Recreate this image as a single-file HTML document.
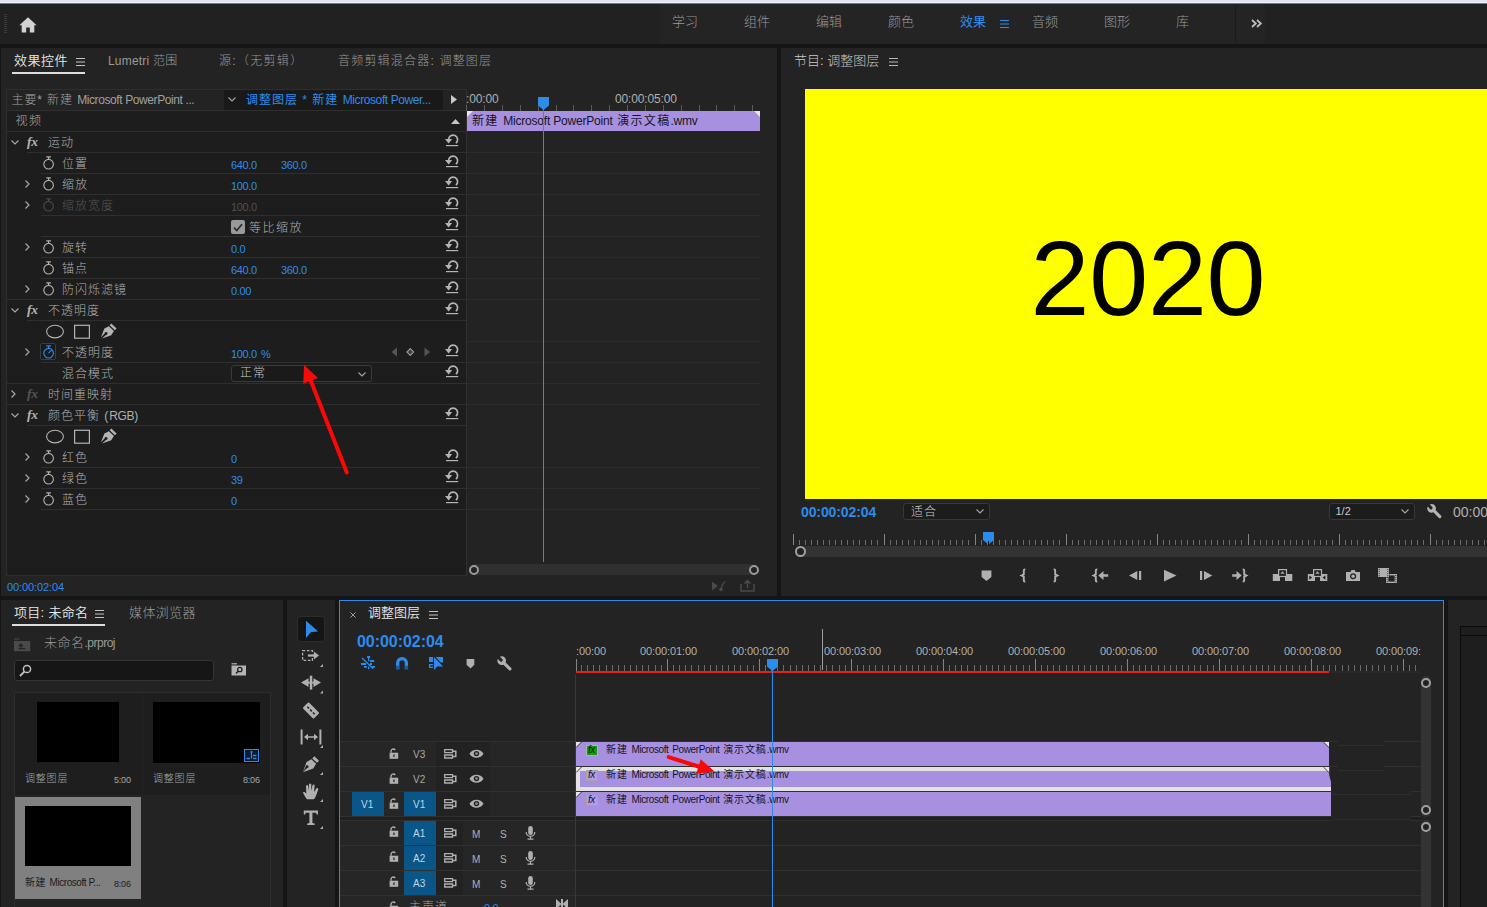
<!DOCTYPE html>
<html lang="zh-CN">
<head>
<meta charset="utf-8">
<title>Adobe Premiere Pro - 调整图层</title>
<style>
html,body{margin:0;padding:0}
body{width:1487px;height:907px;overflow:hidden;position:relative;background:#151515;color:#a7a7a7;
 font-family:"Liberation Sans","Noto Sans CJK SC",sans-serif;font-size:12px;font-weight:300}
div,span,svg,i,b{position:absolute;box-sizing:border-box}
.t{white-space:nowrap;line-height:1}
.pn{background:#232323}
.bl{color:#2d8ceb}
.wh{color:#dcdcdc}
.dm{color:#5a5a5a}
svg{overflow:visible}
.ln{background:#2f2f2f;height:1px}
.fx{font-style:italic;font-weight:700;font-size:13.500px;letter-spacing:-.2px;color:#b4b4b4;font-family:"Liberation Serif","Liberation Sans",serif}
.v{font-size:11px;color:#2d8ceb;letter-spacing:-.35px;font-weight:400}
em{font-style:normal;letter-spacing:-.4px}
.ic{fill:#a7a7a7}
.st{stroke:#a7a7a7;fill:none}
</style>
</head>
<body>
<!-- window top edge -->
<div style="left:0;top:0;width:1487px;height:2px;background:#e1e4f6"></div>
<div style="left:0;top:2px;width:1487px;height:1px;background:#f2f3fa"></div>
<div style="left:0;top:3px;width:1487px;height:1px;background:#77777c"></div>

<!-- workspace bar -->
<div id="topbar" style="left:0;top:4px;width:1487px;height:40px;background:#212121">
  <div style="left:660px;top:0;width:605px;height:40px;background:#242424"></div>
  <div style="left:1235px;top:0;width:1px;height:40px;background:#1a1a1a"></div>
  <!-- grip -->
  <div style="left:4px;top:10px;width:3px;height:20px;background:repeating-linear-gradient(#3a3a3a 0 1px,transparent 1px 2px)"></div>
  <!-- home -->
  <svg style="left:19px;top:13px" width="18" height="16" viewBox="0 0 18 16"><path fill="#d2d2d2" d="M9 0.3 L17.6 8.2 H15.3 V15.6 H10.8 V10.4 H7.2 V15.6 H2.7 V8.2 H0.4 Z"/></svg>
  <span class="t" style="left:672px;top:11px;font-size:13px;color:#999">学习</span>
  <span class="t" style="left:744px;top:11px;font-size:13px;color:#999">组件</span>
  <span class="t" style="left:816px;top:11px;font-size:13px;color:#999">编辑</span>
  <span class="t" style="left:888px;top:11px;font-size:13px;color:#999">颜色</span>
  <span class="t bl" style="left:960px;top:11px;font-size:13px;font-weight:400">效果</span>
  <svg style="left:1000px;top:16px" width="9" height="8" viewBox="0 0 9 8"><path d="M0 .5H9M0 4H9M0 7.5H9" stroke="#2d8ceb" stroke-width="1.1"/></svg>
  <span class="t" style="left:1032px;top:11px;font-size:13px;color:#999">音频</span>
  <span class="t" style="left:1104px;top:11px;font-size:13px;color:#999">图形</span>
  <span class="t" style="left:1176px;top:11px;font-size:13px;color:#999">库</span>
  <svg style="left:1251px;top:15px" width="11" height="9" viewBox="0 0 11 9"><path d="M1 1 4.800 4.500 1 8M6 1 9.800 4.500 6 8" stroke="#bdbdbd" stroke-width="1.800" fill="none"/></svg>
</div>
<!-- ===== Effect Controls panel ===== -->
<div class="pn" style="left:1px;top:48px;width:776px;height:548px"></div>
<span class="t wh" style="left:14px;top:54px;font-size:13px;font-weight:350;color:#e8e8e8;letter-spacing:.5px">效果控件</span>
<svg style="left:76px;top:58px" width="9" height="8" viewBox="0 0 9 8"><path d="M0 .5H9M0 4H9M0 7.5H9" stroke="#c4c4c4" stroke-width="1"/></svg>
<div style="left:12px;top:72px;width:73px;height:2px;background:#dcdcdc"></div>
<span class="t" style="left:108px;top:55px;font-size:12px;color:#9a9a9a;letter-spacing:.2px">Lumetri 范围</span>
<span class="t" style="left:219px;top:55px;font-size:12px;color:#9a9a9a;letter-spacing:1.3px">源:（无剪辑）</span>
<span class="t" style="left:338px;top:55px;font-size:12px;color:#9a9a9a;letter-spacing:1.2px">音频剪辑混合器: 调整图层</span>
<div style="left:6px;top:89px;width:461px;height:487px;background:#1d1d1d;border:1px solid #2f2f2f"></div>
<div style="left:7px;top:90px;width:217px;height:20px;background:#232323"></div>
<div style="left:224px;top:90px;width:219px;height:20px;background:#191919"></div>
<div style="left:443px;top:90px;width:23px;height:20px;background:#232323"></div>
<span class="t" style="left:11.500px;top:94px;font-size:12px;color:#a0a0a0;letter-spacing:.9px">主要* 新建 <em>Microsoft PowerPoint ...</em></span>
<svg style="left:228px;top:97px" width="8" height="5" viewBox="0 0 8 5"><path d="M.5 .5 4 4 7.5 .5" class="st" stroke-width="1.1"/></svg>
<span class="t bl" style="left:246px;top:94px;font-size:12px;font-weight:400;letter-spacing:1px">调整图层 * 新建 <em>Microsoft Power...</em></span>
<svg style="left:451px;top:95px" width="6" height="9" viewBox="0 0 6 9"><path d="M0 0 6 4.5 0 9Z" fill="#c8c8c8"/></svg>
<div class="ln" style="left:7px;top:110px;width:459px"></div>
<span class="t" style="left:15.500px;top:115px;font-size:12px;color:#a7a7a7;letter-spacing:1.600px">视频</span>
<svg style="left:451px;top:119px" width="9" height="5" viewBox="0 0 9 5"><path d="M0 5 4.5 0 9 5Z" fill="#c8c8c8"/></svg>
<div class="ln" style="left:7px;top:131px;width:459px"></div>
<svg style="left:11px;top:140px" width="8" height="5" viewBox="0 0 8 5"><path d="M.5 .5 4 4 7.5 .5" class="st" stroke-width="1.2"/></svg>
<i class="t fx" style="left:27px;top:135px">fx</i>
<span class="t" style="left:48px;top:137px;font-size:12px;color:#b0b0b0;letter-spacing:1px">运动</span>
<svg style="left:445px;top:134px" width="14" height="13" viewBox="0 0 14 13"><path d="M3.6 5.6A4.5 4.5 0 1 1 10.9 9.1" fill="none" stroke="#b4b4b4" stroke-width="1.7"/><path d="M0 5H7.2L3.6 9.4Z" fill="#b4b4b4"/><path d="M1 11.6H13.2" stroke="#b4b4b4" stroke-width="1.2"/></svg>
<div class="ln" style="left:27px;top:152px;width:439px"></div>
<svg style="left:43px;top:156px" width="12" height="14" viewBox="0 0 12 14"><circle cx="5.6" cy="8.2" r="4.8" fill="none" stroke="#b0b0b0" stroke-width="1.15"/><path d="M3.3 .8H7.9M5.6 .8V3.2" stroke="#b0b0b0" stroke-width="1.2" fill="none"/></svg>
<span class="t" style="left:62px;top:158px;font-size:12px;color:#b0b0b0;letter-spacing:1px">位置</span>
<span class="t v" style="left:231px;top:160px">640.0</span>
<span class="t v" style="left:281px;top:160px">360.0</span>
<svg style="left:445px;top:155px" width="14" height="13" viewBox="0 0 14 13"><path d="M3.6 5.6A4.5 4.5 0 1 1 10.9 9.1" fill="none" stroke="#b4b4b4" stroke-width="1.7"/><path d="M0 5H7.2L3.6 9.4Z" fill="#b4b4b4"/><path d="M1 11.6H13.2" stroke="#b4b4b4" stroke-width="1.2"/></svg>
<div class="ln" style="left:41px;top:173px;width:425px"></div>
<svg style="left:25px;top:180px" width="5" height="8" viewBox="0 0 5 8"><path d="M.5 .5 4 4 .5 7.5" class="st" stroke-width="1.2"/></svg>
<svg style="left:43px;top:177px" width="12" height="14" viewBox="0 0 12 14"><circle cx="5.6" cy="8.2" r="4.8" fill="none" stroke="#b0b0b0" stroke-width="1.15"/><path d="M3.3 .8H7.9M5.6 .8V3.2" stroke="#b0b0b0" stroke-width="1.2" fill="none"/></svg>
<span class="t" style="left:62px;top:179px;font-size:12px;color:#b0b0b0;letter-spacing:1px">缩放</span>
<span class="t v" style="left:231px;top:181px">100.0</span>
<svg style="left:445px;top:176px" width="14" height="13" viewBox="0 0 14 13"><path d="M3.6 5.6A4.5 4.5 0 1 1 10.9 9.1" fill="none" stroke="#b4b4b4" stroke-width="1.7"/><path d="M0 5H7.2L3.6 9.4Z" fill="#b4b4b4"/><path d="M1 11.6H13.2" stroke="#b4b4b4" stroke-width="1.2"/></svg>
<div class="ln" style="left:41px;top:194px;width:425px"></div>
<svg style="left:25px;top:201px" width="5" height="8" viewBox="0 0 5 8"><path d="M.5 .5 4 4 .5 7.5" class="st" stroke-width="1.2"/></svg>
<svg style="left:43px;top:198px" width="12" height="14" viewBox="0 0 12 14"><circle cx="5.6" cy="8.2" r="4.8" fill="none" stroke="#4a4a4a" stroke-width="1.15"/><path d="M3.3 .8H7.9M5.6 .8V3.2" stroke="#4a4a4a" stroke-width="1.2" fill="none"/></svg>
<span class="t" style="left:62px;top:200px;font-size:12px;color:#555;letter-spacing:1px">缩放宽度</span>
<span class="t v" style="left:231px;top:202px;color:#505050">100.0</span>
<svg style="left:445px;top:197px" width="14" height="13" viewBox="0 0 14 13"><path d="M3.6 5.6A4.5 4.5 0 1 1 10.9 9.1" fill="none" stroke="#b4b4b4" stroke-width="1.7"/><path d="M0 5H7.2L3.6 9.4Z" fill="#b4b4b4"/><path d="M1 11.6H13.2" stroke="#b4b4b4" stroke-width="1.2"/></svg>
<div class="ln" style="left:41px;top:215px;width:425px"></div>
<div style="left:231px;top:220px;width:14px;height:14px;background:#9a9a9a;border-radius:2px"></div>
<svg style="left:233px;top:223px" width="10" height="9" viewBox="0 0 10 9"><path d="M1 4.6 3.8 7.6 9 1.2" fill="none" stroke="#2a2a2a" stroke-width="1.600"/></svg>
<span class="t" style="left:249px;top:222px;font-size:12px;color:#b0b0b0;letter-spacing:1.500px">等比缩放</span>
<svg style="left:445px;top:218px" width="14" height="13" viewBox="0 0 14 13"><path d="M3.6 5.6A4.5 4.5 0 1 1 10.9 9.1" fill="none" stroke="#b4b4b4" stroke-width="1.7"/><path d="M0 5H7.2L3.6 9.4Z" fill="#b4b4b4"/><path d="M1 11.6H13.2" stroke="#b4b4b4" stroke-width="1.2"/></svg>
<div class="ln" style="left:41px;top:236px;width:425px"></div>
<svg style="left:25px;top:243px" width="5" height="8" viewBox="0 0 5 8"><path d="M.5 .5 4 4 .5 7.5" class="st" stroke-width="1.2"/></svg>
<svg style="left:43px;top:240px" width="12" height="14" viewBox="0 0 12 14"><circle cx="5.6" cy="8.2" r="4.8" fill="none" stroke="#b0b0b0" stroke-width="1.15"/><path d="M3.3 .8H7.9M5.6 .8V3.2" stroke="#b0b0b0" stroke-width="1.2" fill="none"/></svg>
<span class="t" style="left:62px;top:242px;font-size:12px;color:#b0b0b0;letter-spacing:1px">旋转</span>
<span class="t v" style="left:231px;top:244px">0.0</span>
<svg style="left:445px;top:239px" width="14" height="13" viewBox="0 0 14 13"><path d="M3.6 5.6A4.5 4.5 0 1 1 10.9 9.1" fill="none" stroke="#b4b4b4" stroke-width="1.7"/><path d="M0 5H7.2L3.6 9.4Z" fill="#b4b4b4"/><path d="M1 11.6H13.2" stroke="#b4b4b4" stroke-width="1.2"/></svg>
<div class="ln" style="left:41px;top:257px;width:425px"></div>
<svg style="left:43px;top:261px" width="12" height="14" viewBox="0 0 12 14"><circle cx="5.6" cy="8.2" r="4.8" fill="none" stroke="#b0b0b0" stroke-width="1.15"/><path d="M3.3 .8H7.9M5.6 .8V3.2" stroke="#b0b0b0" stroke-width="1.2" fill="none"/></svg>
<span class="t" style="left:62px;top:263px;font-size:12px;color:#b0b0b0;letter-spacing:1px">锚点</span>
<span class="t v" style="left:231px;top:265px">640.0</span>
<span class="t v" style="left:281px;top:265px">360.0</span>
<svg style="left:445px;top:260px" width="14" height="13" viewBox="0 0 14 13"><path d="M3.6 5.6A4.5 4.5 0 1 1 10.9 9.1" fill="none" stroke="#b4b4b4" stroke-width="1.7"/><path d="M0 5H7.2L3.6 9.4Z" fill="#b4b4b4"/><path d="M1 11.6H13.2" stroke="#b4b4b4" stroke-width="1.2"/></svg>
<div class="ln" style="left:41px;top:278px;width:425px"></div>
<svg style="left:25px;top:285px" width="5" height="8" viewBox="0 0 5 8"><path d="M.5 .5 4 4 .5 7.5" class="st" stroke-width="1.2"/></svg>
<svg style="left:43px;top:282px" width="12" height="14" viewBox="0 0 12 14"><circle cx="5.6" cy="8.2" r="4.8" fill="none" stroke="#b0b0b0" stroke-width="1.15"/><path d="M3.3 .8H7.9M5.6 .8V3.2" stroke="#b0b0b0" stroke-width="1.2" fill="none"/></svg>
<span class="t" style="left:62px;top:284px;font-size:12px;color:#b0b0b0;letter-spacing:1px">防闪烁滤镜</span>
<span class="t v" style="left:231px;top:286px">0.00</span>
<svg style="left:445px;top:281px" width="14" height="13" viewBox="0 0 14 13"><path d="M3.6 5.6A4.5 4.5 0 1 1 10.9 9.1" fill="none" stroke="#b4b4b4" stroke-width="1.7"/><path d="M0 5H7.2L3.6 9.4Z" fill="#b4b4b4"/><path d="M1 11.6H13.2" stroke="#b4b4b4" stroke-width="1.2"/></svg>
<div class="ln" style="left:7px;top:299px;width:459px"></div>
<svg style="left:11px;top:308px" width="8" height="5" viewBox="0 0 8 5"><path d="M.5 .5 4 4 7.5 .5" class="st" stroke-width="1.2"/></svg>
<i class="t fx" style="left:27px;top:303px">fx</i>
<span class="t" style="left:48px;top:305px;font-size:12px;color:#b0b0b0;letter-spacing:1px">不透明度</span>
<svg style="left:445px;top:302px" width="14" height="13" viewBox="0 0 14 13"><path d="M3.6 5.6A4.5 4.5 0 1 1 10.9 9.1" fill="none" stroke="#b4b4b4" stroke-width="1.7"/><path d="M0 5H7.2L3.6 9.4Z" fill="#b4b4b4"/><path d="M1 11.6H13.2" stroke="#b4b4b4" stroke-width="1.2"/></svg>
<div class="ln" style="left:27px;top:320px;width:439px"></div>
<svg style="left:46px;top:323px" width="72" height="16" viewBox="0 0 72 16"><ellipse cx="9" cy="8.600" rx="8.400" ry="6.300" fill="none" stroke="#b4b4b4" stroke-width="1.100"/><rect x="28.600" y="2.300" width="14.800" height="12.900" fill="none" stroke="#b4b4b4" stroke-width="1.200"/><path d="M65.3 .6 70.6 5.6 68.9 7.2 63.7 2.3ZM62.9 3.2 67.9 8 65.2 12.3 56 15.6 60 12 A1.5 1.5 0 1 0 58.6 10.4L54.9 14.3 58.4 5.5Z" fill="#b4b4b4"/></svg>
<svg style="left:25px;top:348px" width="5" height="8" viewBox="0 0 5 8"><path d="M.5 .5 4 4 .5 7.5" class="st" stroke-width="1.2"/></svg>
<div style="left:40px;top:343px;width:16px;height:17px;border:1px solid #3c3c3c;border-radius:2px;background:#1a1a1a"></div>
<svg style="left:43px;top:345px" width="12" height="14" viewBox="0 0 12 14"><circle cx="5.6" cy="8.2" r="4.8" fill="none" stroke="#2d8ceb" stroke-width="1.15"/><path d="M3.3 .8H7.9M5.6 .8V3.2" stroke="#2d8ceb" stroke-width="1.2" fill="none"/><path d="M5.600 8.200 8.600 5.200" stroke="#2d8ceb" stroke-width="1.100"/></svg>
<span class="t" style="left:62px;top:347px;font-size:12px;color:#b0b0b0;letter-spacing:1px">不透明度</span>
<span class="t v" style="left:231px;top:349px;word-spacing:1.500px">100.0 %</span>
<svg style="left:391px;top:347px" width="42" height="10" viewBox="0 0 42 10"><path d="M6 .5V9.5L.5 5Z" fill="#555"/><path d="M33.500 .5V9.500L39 5Z" fill="#555"/><path d="M19.300 1.600 22.600 5 19.300 8.400 16 5Z" fill="#3a3a3a" stroke="#999" stroke-width="1.200"/></svg>
<svg style="left:445px;top:344px" width="14" height="13" viewBox="0 0 14 13"><path d="M3.6 5.6A4.5 4.5 0 1 1 10.9 9.1" fill="none" stroke="#b4b4b4" stroke-width="1.7"/><path d="M0 5H7.2L3.6 9.4Z" fill="#b4b4b4"/><path d="M1 11.6H13.2" stroke="#b4b4b4" stroke-width="1.2"/></svg>
<div class="ln" style="left:41px;top:362px;width:425px"></div>
<span class="t" style="left:62px;top:368px;font-size:12px;color:#b0b0b0;letter-spacing:1px">混合模式</span>
<div style="left:231px;top:365px;width:140.500px;height:17px;border:1px solid #3a3a3a;border-radius:3px;background:#1a1a1a"></div>
<span class="t" style="left:240px;top:367px;font-size:12px;color:#c8c8c8;letter-spacing:1px">正常</span>
<svg style="left:357.500px;top:372px" width="8" height="5" viewBox="0 0 8 5"><path d="M.5 .5 4 4 7.5 .5" class="st" stroke-width="1.1"/></svg>
<svg style="left:445px;top:365px" width="14" height="13" viewBox="0 0 14 13"><path d="M3.6 5.6A4.5 4.5 0 1 1 10.9 9.1" fill="none" stroke="#b4b4b4" stroke-width="1.7"/><path d="M0 5H7.2L3.6 9.4Z" fill="#b4b4b4"/><path d="M1 11.6H13.2" stroke="#b4b4b4" stroke-width="1.2"/></svg>
<div class="ln" style="left:7px;top:383px;width:459px"></div>
<svg style="left:11px;top:390px" width="5" height="8" viewBox="0 0 5 8"><path d="M.5 .5 4 4 .5 7.5" class="st" stroke-width="1.2"/></svg>
<i class="t fx" style="left:27px;top:387px;color:#555">fx</i>
<span class="t" style="left:48px;top:389px;font-size:12px;color:#b0b0b0;letter-spacing:1px">时间重映射</span>
<div class="ln" style="left:7px;top:404px;width:459px"></div>
<svg style="left:11px;top:413px" width="8" height="5" viewBox="0 0 8 5"><path d="M.5 .5 4 4 7.5 .5" class="st" stroke-width="1.2"/></svg>
<i class="t fx" style="left:27px;top:408px">fx</i>
<span class="t" style="left:48px;top:410px;font-size:12px;color:#b0b0b0;letter-spacing:1px">颜色平衡 (<em>RGB</em>)</span>
<svg style="left:445px;top:407px" width="14" height="13" viewBox="0 0 14 13"><path d="M3.6 5.6A4.5 4.5 0 1 1 10.9 9.1" fill="none" stroke="#b4b4b4" stroke-width="1.7"/><path d="M0 5H7.2L3.6 9.4Z" fill="#b4b4b4"/><path d="M1 11.6H13.2" stroke="#b4b4b4" stroke-width="1.2"/></svg>
<div class="ln" style="left:27px;top:425px;width:439px"></div>
<svg style="left:46px;top:428px" width="72" height="16" viewBox="0 0 72 16"><ellipse cx="9" cy="8.600" rx="8.400" ry="6.300" fill="none" stroke="#b4b4b4" stroke-width="1.100"/><rect x="28.600" y="2.300" width="14.800" height="12.900" fill="none" stroke="#b4b4b4" stroke-width="1.200"/><path d="M65.3 .6 70.6 5.6 68.9 7.2 63.7 2.3ZM62.9 3.2 67.9 8 65.2 12.3 56 15.6 60 12 A1.5 1.5 0 1 0 58.6 10.4L54.9 14.3 58.4 5.5Z" fill="#b4b4b4"/></svg>
<svg style="left:25px;top:453px" width="5" height="8" viewBox="0 0 5 8"><path d="M.5 .5 4 4 .5 7.5" class="st" stroke-width="1.2"/></svg>
<svg style="left:43px;top:450px" width="12" height="14" viewBox="0 0 12 14"><circle cx="5.6" cy="8.2" r="4.8" fill="none" stroke="#b0b0b0" stroke-width="1.15"/><path d="M3.3 .8H7.9M5.6 .8V3.2" stroke="#b0b0b0" stroke-width="1.2" fill="none"/></svg>
<span class="t" style="left:62px;top:452px;font-size:12px;color:#b0b0b0;letter-spacing:1px">红色</span>
<span class="t v" style="left:231px;top:454px">0</span>
<svg style="left:445px;top:449px" width="14" height="13" viewBox="0 0 14 13"><path d="M3.6 5.6A4.5 4.5 0 1 1 10.9 9.1" fill="none" stroke="#b4b4b4" stroke-width="1.7"/><path d="M0 5H7.2L3.6 9.4Z" fill="#b4b4b4"/><path d="M1 11.6H13.2" stroke="#b4b4b4" stroke-width="1.2"/></svg>
<div class="ln" style="left:41px;top:467px;width:425px"></div>
<svg style="left:25px;top:474px" width="5" height="8" viewBox="0 0 5 8"><path d="M.5 .5 4 4 .5 7.5" class="st" stroke-width="1.2"/></svg>
<svg style="left:43px;top:471px" width="12" height="14" viewBox="0 0 12 14"><circle cx="5.6" cy="8.2" r="4.8" fill="none" stroke="#b0b0b0" stroke-width="1.15"/><path d="M3.3 .8H7.9M5.6 .8V3.2" stroke="#b0b0b0" stroke-width="1.2" fill="none"/></svg>
<span class="t" style="left:62px;top:473px;font-size:12px;color:#b0b0b0;letter-spacing:1px">绿色</span>
<span class="t v" style="left:231px;top:475px">39</span>
<svg style="left:445px;top:470px" width="14" height="13" viewBox="0 0 14 13"><path d="M3.6 5.6A4.5 4.5 0 1 1 10.9 9.1" fill="none" stroke="#b4b4b4" stroke-width="1.7"/><path d="M0 5H7.2L3.6 9.4Z" fill="#b4b4b4"/><path d="M1 11.6H13.2" stroke="#b4b4b4" stroke-width="1.2"/></svg>
<div class="ln" style="left:41px;top:488px;width:425px"></div>
<svg style="left:25px;top:495px" width="5" height="8" viewBox="0 0 5 8"><path d="M.5 .5 4 4 .5 7.5" class="st" stroke-width="1.2"/></svg>
<svg style="left:43px;top:492px" width="12" height="14" viewBox="0 0 12 14"><circle cx="5.6" cy="8.2" r="4.8" fill="none" stroke="#b0b0b0" stroke-width="1.15"/><path d="M3.3 .8H7.9M5.6 .8V3.2" stroke="#b0b0b0" stroke-width="1.2" fill="none"/></svg>
<span class="t" style="left:62px;top:494px;font-size:12px;color:#b0b0b0;letter-spacing:1px">蓝色</span>
<span class="t v" style="left:231px;top:496px">0</span>
<svg style="left:445px;top:491px" width="14" height="13" viewBox="0 0 14 13"><path d="M3.6 5.6A4.5 4.5 0 1 1 10.9 9.1" fill="none" stroke="#b4b4b4" stroke-width="1.7"/><path d="M0 5H7.2L3.6 9.4Z" fill="#b4b4b4"/><path d="M1 11.6H13.2" stroke="#b4b4b4" stroke-width="1.2"/></svg>
<div class="ln" style="left:41px;top:509px;width:425px"></div>
<div style="left:466px;top:90px;width:1px;height:486px;background:#2f2f2f"></div>
<div style="left:467px;top:89px;width:294px;height:22px;background:#232323"></div>
<div style="left:467px;top:131px;width:294px;height:445px;background:#232323"></div>
<div style="left:761px;top:89px;width:16px;height:487px;background:#232323"></div>
<span class="t" style="left:466px;top:93px;font-size:12px;color:#b0b0b0;font-weight:400;letter-spacing:-.15px">:00:00</span>
<span class="t" style="left:615px;top:93px;font-size:12px;color:#b0b0b0;font-weight:400;letter-spacing:-.15px">00:00:05:00</span>
<div style="left:466px;top:105px;width:1px;height:6px;background:#5a5a5a"></div><div style="left:484px;top:105px;width:1px;height:6px;background:#5a5a5a"></div><div style="left:502px;top:105px;width:1px;height:6px;background:#5a5a5a"></div><div style="left:520px;top:105px;width:1px;height:6px;background:#5a5a5a"></div><div style="left:538px;top:105px;width:1px;height:6px;background:#5a5a5a"></div><div style="left:556px;top:105px;width:1px;height:6px;background:#5a5a5a"></div><div style="left:573px;top:105px;width:1px;height:6px;background:#5a5a5a"></div><div style="left:591px;top:105px;width:1px;height:6px;background:#5a5a5a"></div><div style="left:609px;top:105px;width:1px;height:6px;background:#5a5a5a"></div><div style="left:627px;top:105px;width:1px;height:6px;background:#5a5a5a"></div><div style="left:645px;top:105px;width:1px;height:6px;background:#5a5a5a"></div><div style="left:663px;top:105px;width:1px;height:6px;background:#5a5a5a"></div><div style="left:681px;top:105px;width:1px;height:6px;background:#5a5a5a"></div><div style="left:699px;top:105px;width:1px;height:6px;background:#5a5a5a"></div><div style="left:716px;top:105px;width:1px;height:6px;background:#5a5a5a"></div><div style="left:734px;top:105px;width:1px;height:6px;background:#5a5a5a"></div><div style="left:752px;top:105px;width:1px;height:6px;background:#5a5a5a"></div>
<div style="left:467px;top:111px;width:293px;height:20px;background:#a890e0"></div>
<svg style="left:467px;top:111px" width="293" height="6" viewBox="0 0 293 6"><path d="M0 0H6L0 6Z" fill="#e6e6e6"/><path d="M293 0H287L293 6Z" fill="#e6e6e6"/></svg>
<span class="t" style="left:472px;top:115px;font-size:12px;color:#15151f;font-weight:400;letter-spacing:1.3px">新建 <em style="letter-spacing:-.2px">Microsoft PowerPoint</em> 演示文稿<em style="letter-spacing:-.2px">.wmv</em></span>
<div style="left:467px;top:152px;width:293px;height:1px;background:#2b2b2b"></div><div style="left:467px;top:173px;width:293px;height:1px;background:#2b2b2b"></div><div style="left:467px;top:194px;width:293px;height:1px;background:#2b2b2b"></div><div style="left:467px;top:215px;width:293px;height:1px;background:#2b2b2b"></div><div style="left:467px;top:236px;width:293px;height:1px;background:#2b2b2b"></div><div style="left:467px;top:257px;width:293px;height:1px;background:#2b2b2b"></div><div style="left:467px;top:278px;width:293px;height:1px;background:#2b2b2b"></div><div style="left:467px;top:299px;width:293px;height:1px;background:#2b2b2b"></div><div style="left:467px;top:341px;width:293px;height:1px;background:#2b2b2b"></div><div style="left:467px;top:362px;width:293px;height:1px;background:#2b2b2b"></div><div style="left:467px;top:383px;width:293px;height:1px;background:#2b2b2b"></div><div style="left:467px;top:404px;width:293px;height:1px;background:#2b2b2b"></div><div style="left:467px;top:467px;width:293px;height:1px;background:#2b2b2b"></div><div style="left:467px;top:488px;width:293px;height:1px;background:#2b2b2b"></div><div style="left:467px;top:509px;width:293px;height:1px;background:#2b2b2b"></div>
<div style="left:543px;top:100px;width:1px;height:462px;background:#2d8ceb"></div>
<svg style="left:538px;top:97px" width="11" height="13" viewBox="0 0 11 13"><path d="M0 0H11V8.5L5.5 13 0 8.5Z" fill="#2d8ceb"/></svg>
<div style="left:470px;top:564px;width:288px;height:11px;background:#303030;border-radius:5px"></div>
<div style="left:468.5px;top:564.5px;width:10px;height:10px;border:2px solid #9a9a9a;border-radius:50%;background:#232323"></div><div style="left:748.5px;top:564.5px;width:10px;height:10px;border:2px solid #9a9a9a;border-radius:50%;background:#232323"></div>
<span class="t bl" style="left:7px;top:582px;font-size:11px;font-weight:400;letter-spacing:-.1px">00:00:02:04</span>
<svg style="left:712px;top:580px" width="44" height="12" viewBox="0 0 44 12"><path d="M0 1.5 6 6 0 10.500Z" fill="#4a4a4a"/><path d="M8.500 9.500C10 6 11 3 13 1.500" stroke="#4a4a4a" stroke-width="1.4" fill="none"/><circle cx="9" cy="9.500" r="1.800" fill="#4a4a4a"/><path d="M29 4V11H42V4M35.500 8V1M32.500 3.500 35.500 .5 38.500 3.500" stroke="#4a4a4a" stroke-width="1.500" fill="none"/></svg>
<!-- ===== Program monitor panel ===== -->
<div class="pn" style="left:781px;top:48px;width:706px;height:548px"></div>
<span class="t wh" style="left:794px;top:54px;font-size:13px;font-weight:300;color:#c8c8c8">节目: 调整图层</span>
<svg style="left:889px;top:58px" width="9" height="8" viewBox="0 0 9 8"><path d="M0 .5H9M0 4H9M0 7.5H9" stroke="#b8b8b8" stroke-width="1"/></svg>
<div style="left:805px;top:89px;width:682px;height:410px;background:#ffff00"></div>
<span class="t" style="left:1030.5px;top:225px;font-size:106px;color:#000;font-weight:400;letter-spacing:-.25px">2020</span>
<span class="t bl" style="left:801px;top:505px;font-size:14px;font-weight:700;letter-spacing:-.1px">00:00:02:04</span>
<div style="left:903px;top:503px;width:87px;height:17px;border:1px solid #383838;border-radius:3px;background:#1c1c1c"></div>
<span class="t" style="left:911.0px;top:506px;font-size:12px;color:#c8c8c8;letter-spacing:1px">适合</span>
<svg style="left:976px;top:509px" width="8" height="5" viewBox="0 0 8 5"><path d="M.5 .5 4 4 7.5 .5" class="st" stroke-width="1.1"/></svg>
<div style="left:1329px;top:503px;width:86px;height:17px;border:1px solid #383838;border-radius:3px;background:#1c1c1c"></div>
<span class="t" style="left:1335.5px;top:506px;font-size:11px;color:#c8c8c8;letter-spacing:0px">1/2</span>
<svg style="left:1401px;top:509px" width="8" height="5" viewBox="0 0 8 5"><path d="M.5 .5 4 4 7.5 .5" class="st" stroke-width="1.1"/></svg>
<svg style="left:0;top:0" width="1" height="1"><g transform="translate(1431.6 508.4) rotate(-45)"><path d="M-1.500 -4.030A4.300 4.300 0 0 0 -1.600 3.990L-1.600 11.600A1.600 1.600 0 0 0 1.600 11.600L1.600 3.990A4.300 4.300 0 0 0 1.500 -4.030L1.500 -.800A1.500 1.500 0 0 1 -1.500 -.800Z" fill="#b4b4b4"/></g></svg>
<span class="t" style="left:1453px;top:505px;font-size:14px;color:#b0b0b0;font-weight:400">00:00:08:06</span>
<svg style="left:0;top:0" width="1487" height="560" viewBox="0 0 1487 560"><path d="M799.5 540v5M805.5 540v5M811.5 540v5M817.5 540v5M823.5 540v5M829.5 540v5M835.5 540v5M841.5 540v5M847.5 540v5M853.5 540v5M859.5 540v5M865.5 540v5M871.5 540v5M877.5 540v5M890.5 540v5M896.5 540v5M902.5 540v5M908.5 540v5M914.5 540v5M920.5 540v5M926.5 540v5M932.5 540v5M938.5 540v5M944.5 540v5M950.5 540v5M956.5 540v5M962.5 540v5M968.5 540v5M981.5 540v5M987.5 540v5M993.5 540v5M999.5 540v5M1005.5 540v5M1011.5 540v5M1017.5 540v5M1023.5 540v5M1029.5 540v5M1035.5 540v5M1041.5 540v5M1047.5 540v5M1053.5 540v5M1059.5 540v5M1072.5 540v5M1078.5 540v5M1084.5 540v5M1090.5 540v5M1096.5 540v5M1102.5 540v5M1108.5 540v5M1114.5 540v5M1120.5 540v5M1126.5 540v5M1132.5 540v5M1138.5 540v5M1144.5 540v5M1150.5 540v5M1163.5 540v5M1169.5 540v5M1175.5 540v5M1181.5 540v5M1187.5 540v5M1193.5 540v5M1199.5 540v5M1205.5 540v5M1211.5 540v5M1217.5 540v5M1223.5 540v5M1229.5 540v5M1235.5 540v5M1241.5 540v5M1254.5 540v5M1260.5 540v5M1266.5 540v5M1272.5 540v5M1278.5 540v5M1284.5 540v5M1290.5 540v5M1296.5 540v5M1302.5 540v5M1308.5 540v5M1314.5 540v5M1320.5 540v5M1326.5 540v5M1332.5 540v5M1345.5 540v5M1351.5 540v5M1357.5 540v5M1363.5 540v5M1369.5 540v5M1375.5 540v5M1381.5 540v5M1387.5 540v5M1393.5 540v5M1399.5 540v5M1405.5 540v5M1411.5 540v5M1417.5 540v5M1423.5 540v5M1436.5 540v5M1442.5 540v5M1448.5 540v5M1454.5 540v5M1460.5 540v5M1466.5 540v5M1472.5 540v5M1478.5 540v5M1484.5 540v5" stroke="#6c6c6c" stroke-width="1" fill="none"/><path d="M793.5 534v11M884.5 534v11M975.5 534v11M1066.5 534v11M1157.5 534v11M1248.5 534v11M1339.5 534v11M1430.5 534v11" stroke="#858585" stroke-width="1" fill="none"/></svg>
<div style="left:797px;top:546px;width:690px;height:11px;background:#333"></div>
<div style="left:795px;top:546px;width:11px;height:11px;border:2px solid #a0a0a0;border-radius:50%;background:#232323"></div>
<svg style="left:983px;top:532px" width="11" height="13" viewBox="0 0 11 13"><path d="M0 0H11V8L5.5 12.500 0 8Z" fill="#2d8ceb"/><path d="M5.500 9V13" stroke="#111" stroke-width="1"/></svg>
<svg style="left:975px;top:566px" width="430" height="20" viewBox="0 0 430 20" fill="#b0b0b0" stroke="none"><path d="M6.600 4.600H16.400V11L11.500 15.100 6.600 11Z"/><path d="M50.3 3.500H49.8Q48.8 3.500 48.8 4.600V8.400L46.6 9.500 48.8 10.600V14.400Q48.8 15.500 49.8 15.500H50.3" fill="none" stroke="#b0b0b0" stroke-width="1.900"/><path d="M78.7 3.500H79.2Q80.2 3.500 80.2 4.600V8.400L82.4 9.500 80.2 10.600V14.400Q80.2 15.500 79.2 15.500H78.7" fill="none" stroke="#b0b0b0" stroke-width="1.900"/><path d="M122.3 3.500H121.8Q120.8 3.500 120.8 4.600V8.400L118.6 9.500 120.8 10.600V14.400Q120.8 15.500 121.8 15.500H122.3" fill="none" stroke="#b0b0b0" stroke-width="1.900"/><path d="M123.300 9.500 128.500 5V8.300H133.200V10.700H128.500V14Z"/><path d="M154 9.500 162.300 5V14ZM164 5H166.200V14H164Z"/><path d="M189 3.800 201.500 9.600 189 15.400Z"/><path d="M225 5H227.200V14H225ZM229 5 237.300 9.500 229 14Z"/><path d="M257.200 8.300H261.500V5L266.700 9.500 261.500 14V10.700H257.200Z"/><path d="M267.7 3.500H268.2Q269.2 3.500 269.2 4.600V8.400L271.4 9.500 269.2 10.600V14.400Q269.2 15.500 268.2 15.500H267.7" fill="none" stroke="#b0b0b0" stroke-width="1.900"/><path d="M297.8 8.100H305.0V14.900H297.8ZM310.0 8.100H317.3V14.900H310.0Z"/><rect x="303.6" y="3.600" width="7.900" height="6.900" fill="#232323" stroke="#b0b0b0" stroke-width="1.200"/><path d="M305.4 7.800 307.5 5.200 309.6 7.800Z"/><path d="M332.8 8.100H340.0V14.900H332.8ZM345.0 8.100H352.3V14.900H345.0Z"/><rect x="338.6" y="3.600" width="7.900" height="6.900" fill="#232323" stroke="#b0b0b0" stroke-width="1.200"/><path d="M340.4 7.800 342.5 5.200 344.6 7.800Z"/><path d="M334.300 9.400 337.100 11.600 334.300 13.800ZM350.400 9.400 347.600 11.600 350.400 13.800Z" fill="#232323"/><path d="M371 6H375.600L376.500 4H379.700L380.600 6H385V15H371Z"/><circle cx="378.100" cy="10.300" r="3" fill="#232323"/><circle cx="378.100" cy="10.300" r="1.700"/><path d="M411 8H422V17H411Z"/><path d="M413.400 9.400H419.600V15.600H413.400Z" fill="#232323"/><path d="M412.200 11V16.500M420.800 9V16.500" stroke="#232323" stroke-width="1" stroke-dasharray="1 1.100"/><path d="M402.600 1.600H414.400V11.400H402.600Z" fill="#232323"/><path d="M403 2H414V11H403Z"/><path d="M404.200 3V10.500M412.800 3V10.500" stroke="#232323" stroke-width="1" stroke-dasharray="1 1.100"/></svg>
<!-- ===== Project panel ===== -->
<div class="pn" style="left:1px;top:600px;width:282px;height:307px"></div>
<span class="t wh" style="left:14px;top:606px;font-size:13px;font-weight:350;color:#e8e8e8;letter-spacing:.3px">项目: 未命名</span>
<svg style="left:95px;top:610px" width="9" height="8" viewBox="0 0 9 8"><path d="M0 .5H9M0 4H9M0 7.500H9" stroke="#c4c4c4" stroke-width="1"/></svg>
<div style="left:12px;top:624px;width:93px;height:2px;background:#dcdcdc"></div>
<span class="t" style="left:129px;top:606px;font-size:13px;color:#9a9a9a;letter-spacing:.4px">媒体浏览器</span>
<svg style="left:14px;top:638px" width="17" height="14" viewBox="0 0 17 14"><path d="M0 3H16.200V13.200H0Z" fill="#4a4a4a"/><path d="M0 1H5.600" stroke="#4a4a4a" stroke-width="1"/><path d="M4.800 10.600H11.400M6.800 10.600V6.200M4.600 8.400 6.800 6 9 8.400" stroke="#232323" stroke-width="1.300" fill="none"/></svg>
<span class="t" style="left:44px;top:636px;font-size:13px;color:#9a9a9a;letter-spacing:.5px">未命名<em style="letter-spacing:-.5px;font-size:12px;">.prproj</em></span>
<div style="left:14px;top:660px;width:200px;height:21px;border:1px solid #353535;border-radius:3px;background:#161616"></div>
<svg style="left:19px;top:664px" width="13" height="13" viewBox="0 0 13 13"><circle cx="8" cy="5" r="3.600" fill="none" stroke="#c0c0c0" stroke-width="1.500"/><path d="M5.300 7.700 1 12" stroke="#c0c0c0" stroke-width="1.900"/></svg>
<svg style="left:231px;top:663px" width="16" height="13" viewBox="0 0 16 13"><path d="M.5 2.500H15V12.500H.5Z" fill="#b4b4b4"/><path d="M.5 .8H6" stroke="#b4b4b4" stroke-width="1.200"/><circle cx="8.800" cy="6.500" r="2.200" fill="none" stroke="#232323" stroke-width="1.300"/><path d="M7.200 8.200 5 10.500" stroke="#232323" stroke-width="1.400"/></svg>
<div style="left:14px;top:692px;width:257px;height:215px;border:1px solid #2d2d2d;border-bottom:0;background:#232323"></div>
<div style="left:15px;top:693px;width:127px;height:102px;background:#1e1e1e"></div>
<div style="left:143px;top:693px;width:127px;height:102px;background:#1e1e1e"></div>
<div style="left:37px;top:702px;width:82px;height:60px;background:#000"></div>
<div style="left:153px;top:702px;width:107px;height:61px;background:#000"></div>
<svg style="left:244px;top:749px" width="15" height="13" viewBox="0 0 15 13"><rect x=".5" y=".5" width="14" height="12" fill="#0c1a30" stroke="#2d8ceb" stroke-width="1"/><path d="M7.500 2.500V9.500M2.500 9.500H6M9 6.500H12.500M9 9.500H12.500" stroke="#2d8ceb" stroke-width="1.300"/><circle cx="7.500" cy="3" r="1.100" fill="#2d8ceb"/></svg>
<span class="t" style="left:25px;top:774px;font-size:10px;color:#a7a7a7;letter-spacing:.8px">调整图层</span>
<span class="t" style="left:114px;top:776px;font-size:9px;color:#a7a7a7;letter-spacing:-.2px;font-weight:400">5:00</span>
<span class="t" style="left:153px;top:774px;font-size:10px;color:#a7a7a7;letter-spacing:.8px">调整图层</span>
<span class="t" style="left:243px;top:776px;font-size:9px;color:#a7a7a7;letter-spacing:-.2px;font-weight:400">8:06</span>
<div style="left:15px;top:797px;width:126px;height:102px;background:#808080"></div>
<div style="left:25px;top:806px;width:106px;height:60px;background:#000"></div>
<span class="t" style="left:25px;top:878px;font-size:10px;color:#1c1c1c;letter-spacing:.6px;font-weight:400">新建 <em style="letter-spacing:-.45px;">Microsoft P...</em></span>
<span class="t" style="left:114px;top:880px;font-size:9px;color:#1c1c1c;letter-spacing:-.2px;font-weight:400">8:06</span>
<!-- ===== Tools panel ===== -->
<div class="pn" style="left:287px;top:600px;width:48px;height:307px"></div>
<div style="left:297px;top:616px;width:28px;height:26px;border:1px solid #2c2c2c;border-radius:4px;background:#151515"></div>
<svg style="left:297px;top:616px" width="30" height="215" viewBox="0 0 30 215" fill="#b0b0b0"><path d="M9 4.800 21.200 15.600 14 16 9 22Z" fill="#2d8ceb"/><rect x="5.600" y="34.600" width="9.800" height="9.800" fill="none" stroke="#b0b0b0" stroke-width="1.300" stroke-dasharray="2.600 1.700"/><path d="M10.500 38H16.500V34.800L22.500 39.500 16.500 44.200V41H10.500Z" stroke="#232323" stroke-width=".8"/><path d="M26 48V51H23Z"/><path d="M12.800 59.700H15.300V73.600H12.800Z"/><path d="M4 66.600 11.500 62.300V65.600H12.800V67.700H11.500V71Z"/><path d="M24 66.600 16.500 62.300V65.600H15.300V67.700H16.500V71Z"/><path d="M26 74.500V77.500H23Z"/><g transform="rotate(45 14 94.500)"><rect x="6.300" y="90.300" width="15.400" height="8.400" rx="1"/><path d="M8.800 94.500H11.300M12.800 94.500H15.200M16.700 94.500H19.200" stroke="#232323" stroke-width="1.500"/></g><path d="M3.600 113.500H5.600V128.400H3.600ZM22.400 113.500H24.400V128.400H22.400Z"/><path d="M7 121 11 117.700V120.200H17V117.700L21 121 17 124.300V121.800H11V124.300Z"/><path d="M26 129V132H23Z"/><path d="M17.300 140.300 22 144.700 20 146.800 15.300 142.400ZM14.400 143.300 19.100 147.700 16.300 152.600 5.800 156.200 9.800 152.200A1.500 1.500 0 1 0 8.600 151L6.100 155.300 9.600 146Z"/><path d="M26 156V159H23Z"/><path d="M10 183.300C8 181 7 178.500 5.800 176.500 6.700 175.400 8 175.800 9.300 177.800L9 170C9.800 168.600 11 169 11.200 170L11.600 175 12 168.300C12.800 166.900 14.100 167.200 14.300 168.500L14.300 175 15.500 169.200C16.400 168 17.500 168.500 17.600 169.700L17 176 19.500 172.200C20.600 171.500 21.600 172.200 21.300 173.300 20 177 19 181 17 183.300Z"/><path d="M26 183V186H23Z"/><path d="M6.800 194.500H21V198.400H19.600L19.200 196.700H15.400V207L17.600 207.600V209H10.200V207.600L12.400 207V196.700H8.600L8.200 198.400H6.800Z"/><path d="M26 210V213H23Z"/></svg>
<!-- ===== Timeline panel ===== -->
<div class="pn" style="left:339px;top:600px;width:1105px;height:310px;border:1px solid #2d8ceb"></div>
<svg style="left:350px;top:612px" width="6" height="6" viewBox="0 0 6 6"><path d="M.3 .3 5.700 5.700M5.700 .3 .3 5.700" stroke="#9a9a9a" stroke-width="1"/></svg>
<span class="t wh" style="left:368px;top:606px;font-size:13px;font-weight:350;color:#e8e8e8">调整图层</span>
<svg style="left:429px;top:611px" width="9" height="8" viewBox="0 0 9 8"><path d="M0 .5H9M0 4H9M0 7.500H9" stroke="#c4c4c4" stroke-width="1"/></svg>
<span class="t bl" style="left:357px;top:634px;font-size:16px;font-weight:700;letter-spacing:-.05px">00:00:02:04</span>
<svg style="left:360px;top:655px" width="155" height="17" viewBox="0 0 155 17"><path d="M7.100 .9H10.100V3H7.100ZM10.100 5H14.200V7H10.100ZM.9 8.100H6.100V10.100H.9ZM10 8.100H12V10.100H10ZM4 11H7V12.800H4ZM12 11H15V12.800H12Z" fill="#2d8ceb"/><path d="M8.700 3V6.200M8.700 11.500V14.200M2 3 13.200 13.800" stroke="#2d8ceb" stroke-width="1.300"/><path d="M37.700 14.200V7.900A4.350 4.350 0 0 1 46.400 7.900V14.200" fill="none" stroke="#2d8ceb" stroke-width="3.300"/><path d="M36.050 10.800H39.350V14.200H36.050ZM44.750 10.800H48.050V14.200H44.750Z" fill="#1b5c9c"/><path d="M69 2H73V7H69ZM74 2V15.200L77 11.500H83.100ZM75.700 2H83.100V7.400H80.700Z" fill="#2d8ceb"/><path d="M73 9.600H69.600V12.400H73" fill="none" stroke="#2d8ceb" stroke-width="1.200"/><path d="M106.600 4H114.300V9.800L110.500 13.400 106.600 9.800Z" fill="#b0b0b0"/></svg>
<svg style="left:0;top:0" width="1" height="1"><g transform="translate(501.7 660.7) rotate(-45)"><path d="M-1.500 -4.030A4.300 4.300 0 0 0 -1.600 3.990L-1.600 11.600A1.600 1.600 0 0 0 1.600 11.600L1.600 3.990A4.300 4.300 0 0 0 1.500 -4.030L1.500 -.800A1.500 1.500 0 0 1 -1.500 -.800Z" fill="#b0b0b0"/></g></svg>
<div style="left:340px;top:741px;width:236px;height:76px;background:#262626"></div>
<div style="left:340px;top:820px;width:236px;height:87px;background:#262626"></div>
<div style="left:340px;top:817px;width:1081px;height:3px;background:#1f1f1f"></div>
<div style="left:436px;top:741px;width:54px;height:76px;background:#222"></div>
<div style="left:436px;top:820px;width:27px;height:75px;background:#222"></div>
<div style="left:340px;top:741px;width:1081px;height:1px;background:#303030"></div><div style="left:340px;top:766px;width:1081px;height:1px;background:#303030"></div><div style="left:340px;top:791px;width:1081px;height:1px;background:#303030"></div><div style="left:340px;top:816px;width:1081px;height:1px;background:#303030"></div><div style="left:340px;top:820px;width:1081px;height:1px;background:#303030"></div><div style="left:340px;top:845px;width:1081px;height:1px;background:#303030"></div><div style="left:340px;top:870px;width:1081px;height:1px;background:#303030"></div><div style="left:340px;top:895px;width:1081px;height:1px;background:#303030"></div>
<div style="left:575px;top:674px;width:1px;height:233px;background:#383838"></div>
<svg style="left:389px;top:748px" width="10" height="11" viewBox="0 0 10 11"><path d="M.6 4.700H9.200V10.800H.6Z" fill="#b0b0b0"/><path d="M2 4.700V3.200A2.300 2.300 0 0 1 6.200 2" fill="none" stroke="#b0b0b0" stroke-width="1.400"/><path d="M4.300 6.500H5.600V9H4.300Z" fill="#262626"/></svg>
<span class="t" style="left:413px;top:750px;font-size:10px;color:#a7a7a7;font-weight:400">V3</span>
<svg style="left:444px;top:749px" width="13" height="10" viewBox="0 0 13 10"><path d="M.7 .7H8.500V3.700H.7ZM.7 6H8.500V9H.7Z" fill="none" stroke="#b0b0b0" stroke-width="1.300"/><path d="M8.500 2.200H11.800V7.500H8.500" fill="none" stroke="#b0b0b0" stroke-width="1.500"/></svg>
<svg style="left:469px;top:749px" width="15" height="10" viewBox="0 0 15 10"><path d="M.5 4.800C3.200 -.6 11.800 -.6 14.500 4.800 11.800 10.200 3.200 10.200 .5 4.800Z" fill="#b0b0b0"/><circle cx="7.500" cy="4.600" r="2.700" fill="#222"/><circle cx="7.500" cy="4.600" r="1.400" fill="#8a8a8a"/></svg>
<svg style="left:389px;top:773px" width="10" height="11" viewBox="0 0 10 11"><path d="M.6 4.700H9.200V10.800H.6Z" fill="#b0b0b0"/><path d="M2 4.700V3.200A2.300 2.300 0 0 1 6.200 2" fill="none" stroke="#b0b0b0" stroke-width="1.400"/><path d="M4.300 6.500H5.600V9H4.300Z" fill="#262626"/></svg>
<span class="t" style="left:413px;top:775px;font-size:10px;color:#a7a7a7;font-weight:400">V2</span>
<svg style="left:444px;top:774px" width="13" height="10" viewBox="0 0 13 10"><path d="M.7 .7H8.500V3.700H.7ZM.7 6H8.500V9H.7Z" fill="none" stroke="#b0b0b0" stroke-width="1.300"/><path d="M8.500 2.200H11.800V7.500H8.500" fill="none" stroke="#b0b0b0" stroke-width="1.500"/></svg>
<svg style="left:469px;top:774px" width="15" height="10" viewBox="0 0 15 10"><path d="M.5 4.800C3.200 -.6 11.800 -.6 14.500 4.800 11.800 10.200 3.200 10.200 .5 4.800Z" fill="#b0b0b0"/><circle cx="7.500" cy="4.600" r="2.700" fill="#222"/><circle cx="7.500" cy="4.600" r="1.400" fill="#8a8a8a"/></svg>
<svg style="left:389px;top:798px" width="10" height="11" viewBox="0 0 10 11"><path d="M.6 4.700H9.200V10.800H.6Z" fill="#b0b0b0"/><path d="M2 4.700V3.200A2.300 2.300 0 0 1 6.200 2" fill="none" stroke="#b0b0b0" stroke-width="1.400"/><path d="M4.300 6.500H5.600V9H4.300Z" fill="#262626"/></svg>
<div style="left:352px;top:792px;width:32px;height:24px;background:#0b5688"></div><span class="t" style="left:361px;top:800px;font-size:10px;color:#c0d4e4;font-weight:400">V1</span><div style="left:404px;top:792px;width:32px;height:24px;background:#0b5688"></div><span class="t" style="left:413px;top:800px;font-size:10px;color:#c0d4e4;font-weight:400">V1</span>
<svg style="left:444px;top:799px" width="13" height="10" viewBox="0 0 13 10"><path d="M.7 .7H8.500V3.700H.7ZM.7 6H8.500V9H.7Z" fill="none" stroke="#b0b0b0" stroke-width="1.300"/><path d="M8.500 2.200H11.800V7.500H8.500" fill="none" stroke="#b0b0b0" stroke-width="1.500"/></svg>
<svg style="left:469px;top:799px" width="15" height="10" viewBox="0 0 15 10"><path d="M.5 4.800C3.200 -.6 11.800 -.6 14.500 4.800 11.800 10.200 3.200 10.200 .5 4.800Z" fill="#b0b0b0"/><circle cx="7.500" cy="4.600" r="2.700" fill="#222"/><circle cx="7.500" cy="4.600" r="1.400" fill="#8a8a8a"/></svg>
<svg style="left:389px;top:826px" width="10" height="11" viewBox="0 0 10 11"><path d="M.6 4.700H9.200V10.800H.6Z" fill="#b0b0b0"/><path d="M2 4.700V3.200A2.300 2.300 0 0 1 6.200 2" fill="none" stroke="#b0b0b0" stroke-width="1.400"/><path d="M4.300 6.500H5.600V9H4.300Z" fill="#262626"/></svg>
<div style="left:404px;top:821px;width:32px;height:24px;background:#0b5688"></div><span class="t" style="left:413px;top:829px;font-size:10px;color:#c0d4e4;font-weight:400">A1</span>
<svg style="left:444px;top:828px" width="13" height="10" viewBox="0 0 13 10"><path d="M.7 .7H8.500V3.700H.7ZM.7 6H8.500V9H.7Z" fill="none" stroke="#b0b0b0" stroke-width="1.300"/><path d="M8.500 2.200H11.800V7.500H8.500" fill="none" stroke="#b0b0b0" stroke-width="1.500"/></svg>
<span class="t" style="left:472px;top:830px;font-size:10px;color:#b0b0b0;font-weight:400">M</span><span class="t" style="left:500px;top:830px;font-size:10px;color:#b0b0b0;font-weight:400">S</span>
<svg style="left:525px;top:826px" width="11" height="14" viewBox="0 0 11 14"><rect x="3.200" y="0" width="4.600" height="9" rx="2.300" fill="#b0b0b0"/><path d="M1.200 6A4.300 4.300 0 0 0 9.800 6M5.500 10.300V13M2.500 13.200H8.500" fill="none" stroke="#b0b0b0" stroke-width="1.200"/></svg>
<svg style="left:389px;top:851px" width="10" height="11" viewBox="0 0 10 11"><path d="M.6 4.700H9.200V10.800H.6Z" fill="#b0b0b0"/><path d="M2 4.700V3.200A2.300 2.300 0 0 1 6.200 2" fill="none" stroke="#b0b0b0" stroke-width="1.400"/><path d="M4.300 6.500H5.600V9H4.300Z" fill="#262626"/></svg>
<div style="left:404px;top:846px;width:32px;height:24px;background:#0b5688"></div><span class="t" style="left:413px;top:854px;font-size:10px;color:#c0d4e4;font-weight:400">A2</span>
<svg style="left:444px;top:853px" width="13" height="10" viewBox="0 0 13 10"><path d="M.7 .7H8.500V3.700H.7ZM.7 6H8.500V9H.7Z" fill="none" stroke="#b0b0b0" stroke-width="1.300"/><path d="M8.500 2.200H11.800V7.500H8.500" fill="none" stroke="#b0b0b0" stroke-width="1.500"/></svg>
<span class="t" style="left:472px;top:855px;font-size:10px;color:#b0b0b0;font-weight:400">M</span><span class="t" style="left:500px;top:855px;font-size:10px;color:#b0b0b0;font-weight:400">S</span>
<svg style="left:525px;top:851px" width="11" height="14" viewBox="0 0 11 14"><rect x="3.200" y="0" width="4.600" height="9" rx="2.300" fill="#b0b0b0"/><path d="M1.200 6A4.300 4.300 0 0 0 9.800 6M5.500 10.300V13M2.500 13.200H8.500" fill="none" stroke="#b0b0b0" stroke-width="1.200"/></svg>
<svg style="left:389px;top:876px" width="10" height="11" viewBox="0 0 10 11"><path d="M.6 4.700H9.200V10.800H.6Z" fill="#b0b0b0"/><path d="M2 4.700V3.200A2.300 2.300 0 0 1 6.200 2" fill="none" stroke="#b0b0b0" stroke-width="1.400"/><path d="M4.300 6.500H5.600V9H4.300Z" fill="#262626"/></svg>
<div style="left:404px;top:871px;width:32px;height:24px;background:#0b5688"></div><span class="t" style="left:413px;top:879px;font-size:10px;color:#c0d4e4;font-weight:400">A3</span>
<svg style="left:444px;top:878px" width="13" height="10" viewBox="0 0 13 10"><path d="M.7 .7H8.500V3.700H.7ZM.7 6H8.500V9H.7Z" fill="none" stroke="#b0b0b0" stroke-width="1.300"/><path d="M8.500 2.200H11.800V7.500H8.500" fill="none" stroke="#b0b0b0" stroke-width="1.500"/></svg>
<span class="t" style="left:472px;top:880px;font-size:10px;color:#b0b0b0;font-weight:400">M</span><span class="t" style="left:500px;top:880px;font-size:10px;color:#b0b0b0;font-weight:400">S</span>
<svg style="left:525px;top:876px" width="11" height="14" viewBox="0 0 11 14"><rect x="3.200" y="0" width="4.600" height="9" rx="2.300" fill="#b0b0b0"/><path d="M1.200 6A4.300 4.300 0 0 0 9.800 6M5.500 10.300V13M2.500 13.200H8.500" fill="none" stroke="#b0b0b0" stroke-width="1.200"/></svg>
<svg style="left:389px;top:901px" width="10" height="11" viewBox="0 0 10 11"><path d="M.6 4.700H9.200V10.800H.6Z" fill="#b0b0b0"/><path d="M2 4.700V3.200A2.300 2.300 0 0 1 6.200 2" fill="none" stroke="#b0b0b0" stroke-width="1.400"/><path d="M4.300 6.500H5.600V9H4.300Z" fill="#262626"/></svg>
<span class="t" style="left:409px;top:901px;font-size:12px;color:#a7a7a7;letter-spacing:1px">主声道</span>
<span class="t v" style="left:484px;top:903px">0.0</span>
<svg style="left:556px;top:899px" width="12" height="10" viewBox="0 0 12 10"><path d="M0 0 5 4.500V0H7V4.500L12 0V10L7 5.500V10H5V5.500L0 10Z" fill="#b0b0b0"/></svg>
<span class="t" style="left:576.0px;top:646px;font-size:11px;color:#b0b0b0;font-weight:400;letter-spacing:-.1px">:00:00</span><span class="t" style="left:640.0px;top:646px;font-size:11px;color:#b0b0b0;font-weight:400;letter-spacing:-.1px">00:00:01:00</span><span class="t" style="left:732.0px;top:646px;font-size:11px;color:#b0b0b0;font-weight:400;letter-spacing:-.1px">00:00:02:00</span><span class="t" style="left:824.0px;top:646px;font-size:11px;color:#b0b0b0;font-weight:400;letter-spacing:-.1px">00:00:03:00</span><span class="t" style="left:916.0px;top:646px;font-size:11px;color:#b0b0b0;font-weight:400;letter-spacing:-.1px">00:00:04:00</span><span class="t" style="left:1008.0px;top:646px;font-size:11px;color:#b0b0b0;font-weight:400;letter-spacing:-.1px">00:00:05:00</span><span class="t" style="left:1100.0px;top:646px;font-size:11px;color:#b0b0b0;font-weight:400;letter-spacing:-.1px">00:00:06:00</span><span class="t" style="left:1192.0px;top:646px;font-size:11px;color:#b0b0b0;font-weight:400;letter-spacing:-.1px">00:00:07:00</span><span class="t" style="left:1284.0px;top:646px;font-size:11px;color:#b0b0b0;font-weight:400;letter-spacing:-.1px">00:00:08:00</span><span class="t" style="left:1376.0px;top:646px;font-size:11px;color:#b0b0b0;font-weight:400;letter-spacing:-.1px">00:00:09:</span>
<svg style="left:0;top:0" width="1487" height="680" viewBox="0 0 1487 680"><path d="M581.5 665v6M587.5 665v6M593.5 665v6M599.5 665v6M606.5 665v6M612.5 665v6M618.5 665v6M624.5 665v6M630.5 665v6M636.5 665v6M642.5 665v6M648.5 665v6M655.5 665v6M661.5 665v6M667.5 665v6M673.5 665v6M679.5 665v6M685.5 665v6M691.5 665v6M698.5 665v6M704.5 665v6M710.5 665v6M716.5 665v6M722.5 665v6M728.5 665v6M734.5 665v6M740.5 665v6M747.5 665v6M753.5 665v6M759.5 665v6M765.5 665v6M771.5 665v6M777.5 665v6M783.5 665v6M790.5 665v6M796.5 665v6M802.5 665v6M808.5 665v6M814.5 665v6M820.5 665v6M826.5 665v6M832.5 665v6M839.5 665v6M845.5 665v6M851.5 665v6M857.5 665v6M863.5 665v6M869.5 665v6M875.5 665v6M882.5 665v6M888.5 665v6M894.5 665v6M900.5 665v6M906.5 665v6M912.5 665v6M918.5 665v6M924.5 665v6M931.5 665v6M937.5 665v6M943.5 665v6M949.5 665v6M955.5 665v6M961.5 665v6M967.5 665v6M974.5 665v6M980.5 665v6M986.5 665v6M992.5 665v6M998.5 665v6M1004.5 665v6M1010.5 665v6M1016.5 665v6M1023.5 665v6M1029.5 665v6M1035.5 665v6M1041.5 665v6M1047.5 665v6M1053.5 665v6M1059.5 665v6M1066.5 665v6M1072.5 665v6M1078.5 665v6M1084.5 665v6M1090.5 665v6M1096.5 665v6M1102.5 665v6M1108.5 665v6M1115.5 665v6M1121.5 665v6M1127.5 665v6M1133.5 665v6M1139.5 665v6M1145.5 665v6M1151.5 665v6M1158.5 665v6M1164.5 665v6M1170.5 665v6M1176.5 665v6M1182.5 665v6M1188.5 665v6M1194.5 665v6M1200.5 665v6M1207.5 665v6M1213.5 665v6M1219.5 665v6M1225.5 665v6M1231.5 665v6M1237.5 665v6M1243.5 665v6M1250.5 665v6M1256.5 665v6M1262.5 665v6M1268.5 665v6M1274.5 665v6M1280.5 665v6M1286.5 665v6M1292.5 665v6M1299.5 665v6M1305.5 665v6M1311.5 665v6M1317.5 665v6M1323.5 665v6M1329.5 665v6M1335.5 665v6M1342.5 665v6M1348.5 665v6M1354.5 665v6M1360.5 665v6M1366.5 665v6M1372.5 665v6M1378.5 665v6M1384.5 665v6M1391.5 665v6M1397.5 665v6M1403.5 665v6M1409.5 665v6M1415.5 665v6" stroke="#6a6a6a" stroke-width="1" fill="none"/><path d="M576.5 659v12M667.5 659v12M759.5 659v12M851.5 659v12M943.5 659v12M1035.5 659v12M1127.5 659v12M1219.5 659v12M1311.5 659v12M1403.5 659v12" stroke="#858585" stroke-width="1" fill="none"/></svg>
<div style="left:822px;top:629px;width:1px;height:41px;background:#a0a0a0"></div>
<div style="left:576px;top:671px;width:844px;height:2px;background:#282828"></div>
<div style="left:576px;top:671px;width:753px;height:2px;background:#e8211d"></div>
<div style="left:576px;top:742px;width:753px;height:24px;background:#a890e0"></div>
<div style="left:576px;top:767px;width:755px;height:24px;background:#e2e2e2"></div>
<div style="left:580px;top:771px;width:751px;height:16px;background:#a890e0"></div>
<div style="left:1338px;top:740px;width:45px;height:30px;background:#232323"></div><div style="left:1338px;top:745px;width:45px;height:1px;background:#2e2e2e"></div><div style="left:1338px;top:770px;width:45px;height:1px;background:#2e2e2e"></div><div style="left:1332px;top:790px;width:79px;height:31px;background:#232323"></div><div style="left:1332px;top:794px;width:79px;height:1px;background:#2e2e2e"></div><div style="left:1333px;top:819px;width:78px;height:1px;background:#2e2e2e"></div>
<div style="left:576px;top:792px;width:755px;height:24px;background:#a890e0"></div>
<svg style="left:576px;top:742px" width="6" height="6" viewBox="0 0 6 6"><path d="M0 0H5.200L0 5.200Z" fill="#e6e6e6"/><path d="M5.600 0 0 5.600" stroke="#333" stroke-width=".9"/></svg><svg style="left:576px;top:767px" width="6" height="6" viewBox="0 0 6 6"><path d="M0 0H5.200L0 5.200Z" fill="#e6e6e6"/><path d="M5.600 0 0 5.600" stroke="#333" stroke-width=".9"/></svg><svg style="left:576px;top:792px" width="6" height="6" viewBox="0 0 6 6"><path d="M0 0H5.200L0 5.200Z" fill="#e6e6e6"/><path d="M5.600 0 0 5.600" stroke="#333" stroke-width=".9"/></svg><svg style="left:1323px;top:742px" width="6" height="6" viewBox="0 0 6 6"><path d="M6 0H.8L6 5.200Z" fill="#e6e6e6"/><path d="M.4 0 6 5.600" stroke="#333" stroke-width=".9"/></svg><svg style="left:1323px;top:767px" width="6" height="6" viewBox="0 0 6 6"><path d="M6 0H.8L6 5.200Z" fill="#e6e6e6"/><path d="M.4 0 6 5.600" stroke="#333" stroke-width=".9"/></svg>
<div style="left:586px;top:745px;width:12px;height:11px;background:#169a16;border:1px solid #a8b8a0"></div><i class="t" style="left:588px;top:745px;font-size:10px;font-style:italic;font-weight:400;color:#061806;letter-spacing:-.6px">fx</i><span class="t" style="left:606px;top:745px;font-size:10px;color:#14141e;font-weight:400;letter-spacing:.9px">新建 <em style="letter-spacing:-.35;word-spacing:1.500px;">Microsoft PowerPoint</em> 演示文稿<em style="letter-spacing:-.35;word-spacing:1.500px;">.wmv</em></span>
<div style="left:586px;top:770px;width:12px;height:11px;background:#b29ee6;border:1px solid #a4a4a8"></div><i class="t" style="left:588px;top:770px;font-size:10px;font-style:italic;font-weight:400;color:#14102a;letter-spacing:-.6px">fx</i><span class="t" style="left:606px;top:770px;font-size:10px;color:#14141e;font-weight:400;letter-spacing:.9px">新建 <em style="letter-spacing:-.35;word-spacing:1.500px;">Microsoft PowerPoint</em> 演示文稿<em style="letter-spacing:-.35;word-spacing:1.500px;">.wmv</em></span>
<div style="left:586px;top:795px;width:12px;height:11px;background:#b29ee6;border:1px solid #a4a4a8"></div><i class="t" style="left:588px;top:795px;font-size:10px;font-style:italic;font-weight:400;color:#14102a;letter-spacing:-.6px">fx</i><span class="t" style="left:606px;top:795px;font-size:10px;color:#14141e;font-weight:400;letter-spacing:.9px">新建 <em style="letter-spacing:-.35;word-spacing:1.500px;">Microsoft PowerPoint</em> 演示文稿<em style="letter-spacing:-.35;word-spacing:1.500px;">.wmv</em></span>
<div style="left:772px;top:664px;width:1px;height:243px;background:#2d8ceb"></div>
<svg style="left:767px;top:659px" width="11" height="12" viewBox="0 0 11 12"><path d="M0 0H11V7.500L5.500 12 0 7.500Z" fill="#2d8ceb"/></svg>
<svg style="left:1328px;top:766px" width="5" height="22" viewBox="0 0 5 22"><path d="M1.200 .8H4V20L1.200 9Z" fill="#232323"/></svg>
<div style="left:1421px;top:676px;width:10px;height:141px;background:#333;border-radius:5px"></div>
<div style="left:1421px;top:820px;width:10px;height:87px;background:#333;border-radius:5px 5px 0 0"></div>
<div style="left:1421.2px;top:677.7px;width:10px;height:10px;border:2px solid #a0a0a0;border-radius:50%;background:#232323"></div><div style="left:1421.2px;top:805.0px;width:10px;height:10px;border:2px solid #a0a0a0;border-radius:50%;background:#232323"></div><div style="left:1421.2px;top:821.6px;width:10px;height:10px;border:2px solid #a0a0a0;border-radius:50%;background:#232323"></div>
<svg style="left:0;top:0" width="1487" height="907" viewBox="0 0 1487 907"><path d="M310.500 380 346.800 472.500" stroke="#fa0808" stroke-width="4" stroke-linecap="round"/><path d="M304.100 365 303.200 383.700 318 378Z" fill="#fa0808"/><path d="M668.700 757.100 698.500 766.500" stroke="#fa0808" stroke-width="4" stroke-linecap="round"/><path d="M714.700 771.600 700.700 759.300 696.200 773.800Z" fill="#fa0808"/></svg>
<!-- ===== Audio meters panel ===== -->
<div class="pn" style="left:1448px;top:600px;width:39px;height:307px"></div>
<div style="left:1460px;top:626px;width:30px;height:285px;border:1px solid #0a0a0a;background:#1e1e1e"></div>
<div style="left:1460px;top:635px;width:30px;height:1px;background:#0a0a0a"></div>
</body>
</html>
